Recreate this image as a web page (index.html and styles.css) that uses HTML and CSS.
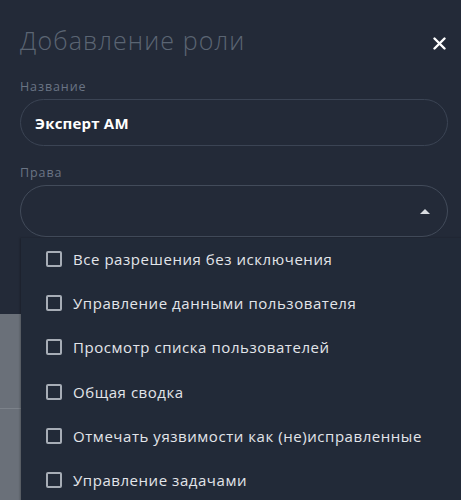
FILE: index.html
```html
<!DOCTYPE html>
<html lang="ru">
<head>
<meta charset="utf-8">
<title>Добавление роли</title>
<link rel="stylesheet" href="styles.css">
</head>
<body>
<div class="page">
  <div class="backdrop">
    <div class="backdrop-row"></div>
  </div>
  <section class="dialog">
    <header class="dialog-head">
      <h1 class="dialog-title">Добавление роли</h1>
      <button class="close" aria-label="Закрыть">
        <svg width="13" height="13" viewBox="0 0 13 13"><path d="M1.5 1.5 L11.5 11.5 M11.5 1.5 L1.5 11.5" stroke="#fff" stroke-width="2.4" stroke-linecap="round"/></svg>
      </button>
    </header>
    <div class="field">
      <div class="label">Название</div>
      <div class="input">Эксперт АМ</div>
    </div>
    <div class="field field-rights">
      <div class="label">Права</div>
      <div class="select">
        <span class="caret"></span>
      </div>
    </div>
  </section>
  <ul class="menu">
    <li class="item"><span class="box"></span>Все разрешения без исключения</li>
    <li class="item"><span class="box"></span>Управление данными пользователя</li>
    <li class="item"><span class="box"></span>Просмотр списка пользователей</li>
    <li class="item"><span class="box"></span>Общая сводка</li>
    <li class="item"><span class="box"></span>Отмечать уязвимости как (не)исправленные</li>
    <li class="item"><span class="box"></span>Управление задачами</li>
  </ul>
</div>
</body>
</html>
```

FILE: styles.css
```css
* { box-sizing: border-box; }
html, body {
  margin: 0;
  padding: 0;
}
body {
  width: 461px;
  height: 500px;
  overflow: hidden;
  background: #6a7079;
  font-family: "Open Sans", "Noto Sans", sans-serif;
}
.page {
  position: relative;
  width: 461px;
  height: 500px;
}
.backdrop {
  position: absolute;
  left: 0;
  right: 0;
  top: 314px;
  bottom: 0;
}
.backdrop-row {
  margin-top: 94px;
  height: 1px;
  background: #7c828a;
}
.dialog {
  position: relative;
  height: 314px;
  background: #232a38;
  padding: 23px 13px 0 20px;
}
.dialog-head {
  display: flex;
  align-items: center;
  justify-content: space-between;
  height: 34px;
}
.dialog-title {
  margin: 0;
  font-family: "Open Sans", sans-serif;
  font-weight: 300;
  font-size: 25px;
  letter-spacing: 1.1px;
  color: #5b6573;
}
.close {
  background: none;
  border: 0;
  padding: 0;
  margin: 6px 2px 0 0;
  width: 13px;
  height: 13px;
  display: flex;
}
.field {
  margin-top: 21px;
  margin-right: 0;
}
.field-rights { margin-top: 18px; }
.label {
  font-size: 12.5px;
  color: #6a7484;
  letter-spacing: 0.9px;
  line-height: 17px;
  margin-bottom: 4px;
}
.input {
  height: 47px;
  width: 428px;
  border: 1px solid #3b4454;
  border-radius: 24px;
  padding: 0 14px;
  display: flex;
  align-items: center;
  color: #ffffff;
  font-weight: 700;
  font-size: 15px;
  letter-spacing: 0.2px;
}
.select {
  position: relative;
  height: 52px;
  width: 428px;
  border: 1.5px solid #424b5a;
  border-radius: 26px;
  display: flex;
  align-items: center;
  justify-content: flex-end;
  padding-right: 17px;
}
.caret {
  width: 0;
  height: 0;
  border-left: 5px solid transparent;
  border-right: 5px solid transparent;
  border-bottom: 5px solid #d8dbe0;
}
.menu {
  position: absolute;
  left: 21px;
  top: 238px;
  width: 460px;
  height: 270px;
  margin: 0;
  padding: 0;
  list-style: none;
  background: #222a38;
  box-shadow: -1px 0 2px rgba(0,0,0,0.25);
}
.item {
  display: flex;
  align-items: center;
  height: 44.3px;
  padding-left: 25px;
  padding-bottom: 3px;
  color: #e2e5ea;
  font-size: 15px;
  letter-spacing: 0.55px;
}
.box {
  width: 16px;
  height: 16px;
  border: 2px solid #a7adb6;
  border-radius: 2px;
  margin-right: 11px;
  flex: none;
}
```
